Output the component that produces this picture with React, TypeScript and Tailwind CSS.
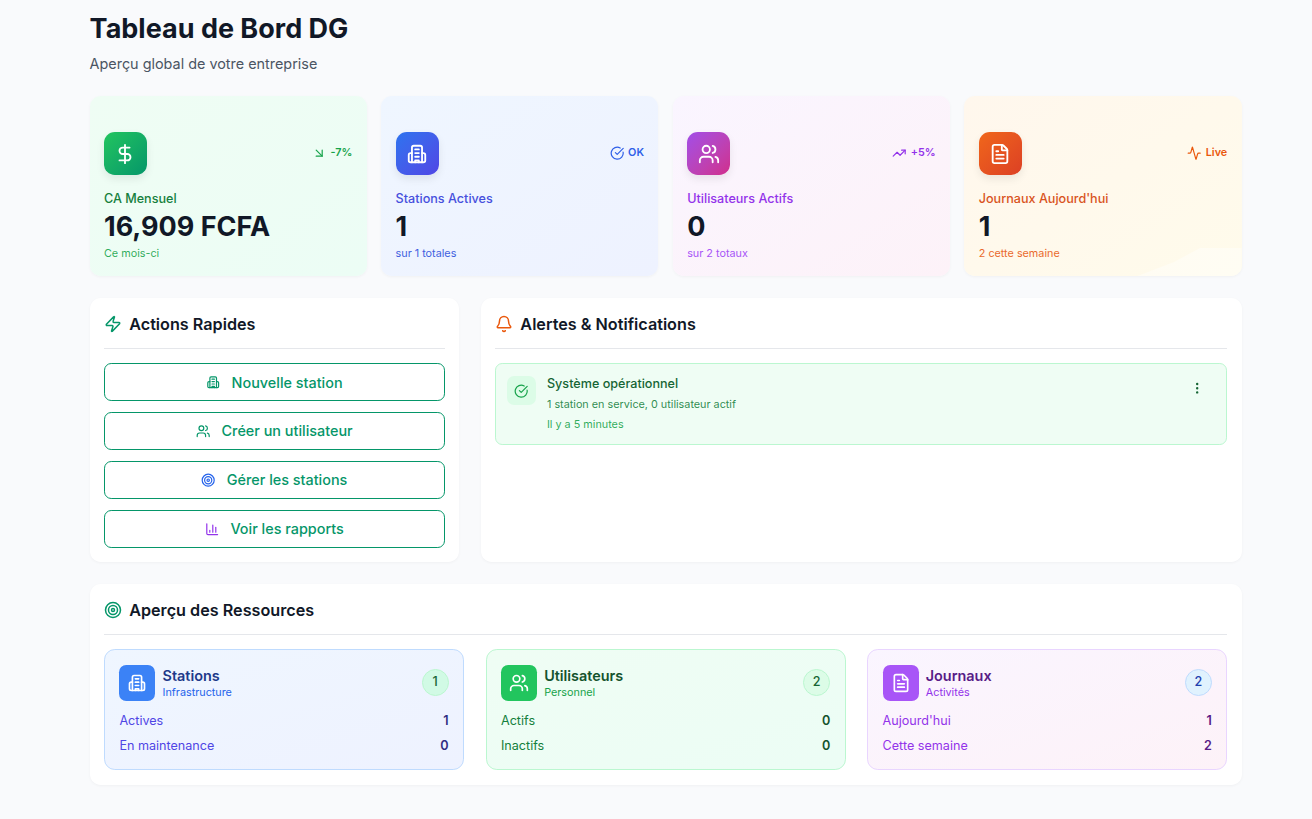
import { Activity, ArrowDownRight, Bell, ChartColumn, CircleCheckBig, DollarSign, EllipsisVertical, FileText, Target, TrendingUp, Users, Zap } from 'lucide-react';
import type { ReactNode } from 'react';

function BuildingIcon({ className }: { className?: string }) {
  return (
    <svg viewBox="0 0 24 24" fill="none" stroke="currentColor" strokeWidth="2" strokeLinecap="round" strokeLinejoin="round" className={className}>
      <path d="M6.5 21V5a2 2 0 0 1 2-2h7a2 2 0 0 1 2 2v16" />
      <path d="M6.5 11H5a2 2 0 0 0-2 2v6a2 2 0 0 0 2 2h14a2 2 0 0 0 2-2v-6a2 2 0 0 0-2-2h-1.5" />
      <path d="M10 7h4M10 11h4M10 15h4M10 21v-2h4v2" />
    </svg>
  );
}

const stats = [
  { label: 'CA Mensuel', value: '16,909 FCFA', sub: 'Ce mois-ci', badge: '-7%', badgeIcon: <ArrowDownRight className="w-[14.4px] h-[14.4px]" />, icon: <DollarSign className="w-[22px] h-[22px]" />, card: 'from-[#effdf4] to-[#ecfdf5]', box: 'from-[#22c55e] to-[#059669]', text: 'text-[#15803d]', subText: 'text-[#16a34a]/90', badgeText: 'text-[#16a34a]' },
  { label: 'Stations Actives', value: '1', sub: 'sur 1 totales', badge: 'OK', badgeIcon: <CircleCheckBig className="w-[14.4px] h-[14.4px]" />, icon: <BuildingIcon className="w-[22px] h-[22px]" />, card: 'from-[#eff6ff] to-[#eef2ff]', box: 'from-[#2b73ef] to-[#4f46e5]', text: 'text-[#4650dd]', subText: 'text-[#3f5fe0]', badgeText: 'text-[#2f5fe8]' },
  { label: 'Utilisateurs Actifs', value: '0', sub: 'sur 2 totaux', badge: '+5%', badgeIcon: <TrendingUp className="w-[14.4px] h-[14.4px]" />, icon: <Users className="w-[22px] h-[22px]" />, card: 'from-[#faf5ff] to-[#fdf2f8]', box: 'from-[#a24ce8] to-[#d12b8c]', text: 'text-[#9333ea]', subText: 'text-[#a855f7]', badgeText: 'text-[#9333ea]' },
  { label: "Journaux Aujourd'hui", value: '1', sub: '2 cette semaine', badge: 'Live', badgeIcon: <Activity className="w-[14.4px] h-[14.4px]" />, icon: <FileText className="w-[22px] h-[22px]" />, card: 'from-[#fff7ed] to-[#fffbeb]', box: 'from-[#f0661a] to-[#dc3f24]', text: 'text-[#d9541e]', subText: 'text-[#ea6a2c]', badgeText: 'text-[#ea580c]' },
];

const actions = [
  { label: 'Nouvelle station', icon: <BuildingIcon className="w-[14.4px] h-[14.4px] text-[#059669]" /> },
  { label: 'Créer un utilisateur', icon: <Users className="w-[14.4px] h-[14.4px] text-[#059669]" /> },
  { label: 'Gérer les stations', icon: <Target className="w-[14.4px] h-[14.4px] text-[#2563eb]" /> },
  { label: 'Voir les rapports', icon: <ChartColumn className="w-[14.4px] h-[14.4px] text-[#9333ea]" /> },
];

const resources = [
  { title: 'Stations', sub: 'Infrastructure', count: '1', icon: <BuildingIcon className="w-[20px] h-[20px]" />, card: 'from-[#eff6ff] to-[#eef2ff] border-[#bfdbfe]', box: 'bg-[#3b82f6]', title2: 'text-[#1e3a8a]', sub2: 'text-[#2563eb]', row: 'text-[#4f46e5]', val: 'text-[#312e81]', pill: 'bg-[#d1fae5] border-[#bbf7d0] text-[#166534]', rows: [['Actives', '1'], ['En maintenance', '0']] },
  { title: 'Utilisateurs', sub: 'Personnel', count: '2', icon: <Users className="w-[20px] h-[20px]" />, card: 'from-[#effdf4] to-[#ecfdf5] border-[#bbf7d0]', box: 'bg-[#22c55e]', title2: 'text-[#14532d]', sub2: 'text-[#16a34a]', row: 'text-[#15803d]', val: 'text-[#14532d]', pill: 'bg-[#dcfce7] border-[#bbf7d0] text-[#166534]', rows: [['Actifs', '0'], ['Inactifs', '0']] },
  { title: 'Journaux', sub: 'Activités', count: '2', icon: <FileText className="w-[20px] h-[20px]" />, card: 'from-[#faf5ff] to-[#fdf2f8] border-[#e9d5ff]', box: 'bg-[#a855f7]', title2: 'text-[#581c87]', sub2: 'text-[#9333ea]', row: 'text-[#9333ea]', val: 'text-[#581c87]', pill: 'bg-[#e0f2fe] border-[#bfdbfe] text-[#1e40af]', rows: [["Aujourd'hui", '1'], ['Cette semaine', '2']] },
];

function PanelTitle({ icon, title }: { icon: ReactNode; title: string }) {
  return (
    <div className="flex items-center gap-[7.2px] h-[24px] pb-[11.5px] border-b border-[#e5e7eb] box-content">
      {icon}
      <h2 className="text-[16.2px] font-semibold leading-[24px] text-[#111827]">{title}</h2>
    </div>
  );
}

export default function App() {
  return (
    <div className="min-h-[819px] bg-[#f9fafc] font-['Inter',sans-serif]">
      <div className="w-[1152px] ml-[89.6px] pt-[13px]">
        <h1 className="text-[27px] font-bold leading-[32px] text-[#111827]">Tableau de Bord DG</h1>
        <p className="mt-[9px] text-[14.4px] leading-[20px] text-[#4b5563]">Aperçu global de votre entreprise</p>

        <div className="grid grid-cols-4 gap-[14.4px] mt-[22px]">
          {stats.map((s, i) => (
            <div key={s.label} className={`relative h-[180px] rounded-[10.8px] bg-gradient-to-br ${s.card} shadow-[0_1px_3px_rgba(0,0,0,0.04)] px-[14.4px] pb-[14px] flex flex-col justify-end overflow-hidden`}>
              {i === 3 && (
                <div className="absolute right-0 bottom-0 w-[104px] h-[28px] opacity-40 bg-[radial-gradient(circle,#ffffff_60%,transparent_61%)] bg-[length:2px_2px] [clip-path:polygon(0_100%,35%_50%,60%_0,100%_0,100%_100%)]" />
              )}
              <div className="flex items-center justify-between">
                <div className={`w-[43px] h-[43px] rounded-[10.8px] bg-gradient-to-br ${s.box} text-white flex items-center justify-center shadow-[0_4px_8px_rgba(0,0,0,0.08)]`}>{s.icon}</div>
                <div className={`flex items-center gap-[4px] text-[10.8px] font-semibold ${s.badgeText}`}>
                  {s.badgeIcon}
                  <span>{s.badge}</span>
                </div>
              </div>
              <div className={`mt-[16px] text-[12.6px] font-medium leading-[16px] ${s.text}`}>{s.label}</div>
              <div className="mt-[2px] text-[27px] font-bold leading-[36px] text-[#111827]">{s.value}</div>
              <div className={`mt-[1px] text-[10.8px] leading-[16px] ${s.subText}`}>{s.sub}</div>
            </div>
          ))}
        </div>

        <div className="flex gap-[21.6px] mt-[22px]">
          <div className="w-[369.6px] h-[264px] bg-white rounded-[10.8px] shadow-[0_1px_3px_rgba(0,0,0,0.04)] p-[14.4px]">
            <PanelTitle icon={<Zap className="w-[18px] h-[18px] text-[#059669]" />} title="Actions Rapides" />
            <div className="flex flex-col gap-[10.8px] mt-[14.6px]">
              {actions.map(a => (
                <button key={a.label} className="h-[38px] flex items-center justify-center gap-[11px] rounded-[7.2px] border border-[#059669] bg-white text-[14.4px] font-medium text-[#059669]">
                  {a.icon}
                  <span>{a.label}</span>
                </button>
              ))}
            </div>
          </div>

          <div className="flex-1 h-[264px] bg-white rounded-[10.8px] shadow-[0_1px_3px_rgba(0,0,0,0.04)] p-[14.4px]">
            <PanelTitle icon={<Bell className="w-[18px] h-[18px] text-[#ea580c]" />} title="Alertes & Notifications" />
            <div className="mt-[14.4px] h-[82px] rounded-[7.2px] border border-[#bbf7d0] bg-[#effdf4] pl-[11px] pr-[21.4px] pt-[12px] flex items-start gap-[10.8px]">
              <div className="w-[29px] h-[29px] rounded-[7.2px] bg-[#dcfce7] flex items-center justify-center">
                <CircleCheckBig className="w-[14.4px] h-[14.4px] text-[#16a34a]" />
              </div>
              <div className="flex-1">
                <div className="text-[12.6px] font-medium leading-[16px] text-[#166534]">Système opérationnel</div>
                <div className="mt-[6px] text-[10.8px] leading-[14px] text-[#15803d]/90">1 station en service, 0 utilisateur actif</div>
                <div className="mt-[6px] text-[10.8px] leading-[14px] text-[#16a34a]/90">Il y a 5 minutes</div>
              </div>
              <EllipsisVertical className="mt-[4.8px] w-[14.4px] h-[14.4px] text-[#166534]" />
            </div>
          </div>
        </div>

        <div className="h-[201px] mt-[22px] bg-white rounded-[10.8px] shadow-[0_1px_3px_rgba(0,0,0,0.04)] p-[14.4px]">
          <PanelTitle icon={<Target className="w-[18px] h-[18px] text-[#059669]" />} title="Aperçu des Ressources" />
          <div className="grid grid-cols-3 gap-[21.6px] mt-[14.4px]">
            {resources.map(r => (
              <div key={r.title} className={`h-[121px] rounded-[10.8px] border bg-gradient-to-br ${r.card} px-[14.4px] pt-[14.4px]`}>
                <div className="flex items-center justify-between">
                  <div className="flex items-center gap-[7.2px]">
                    <div className={`w-[36px] h-[36px] rounded-[7.2px] ${r.box} text-white flex items-center justify-center`}>{r.icon}</div>
                    <div className="mt-[1px]">
                      <div className={`text-[14.4px] font-semibold leading-[18px] ${r.title2}`}>{r.title}</div>
                      <div className={`text-[10.8px] leading-[15px] ${r.sub2}`}>{r.sub}</div>
                    </div>
                  </div>
                  <div className={`w-[27px] h-[27px] rounded-full border flex items-center justify-center text-[12.6px] font-medium ${r.pill}`}>{r.count}</div>
                </div>
                <div className="mt-[12px] flex flex-col gap-[9px]">
                  {r.rows.map(([k, v]) => (
                    <div key={k} className="flex items-center justify-between text-[12.6px] leading-[16px]">
                      <span className={r.row}>{k}</span>
                      <span className={`font-semibold ${r.val}`}>{v}</span>
                    </div>
                  ))}
                </div>
              </div>
            ))}
          </div>
        </div>
      </div>
    </div>
  );
}
